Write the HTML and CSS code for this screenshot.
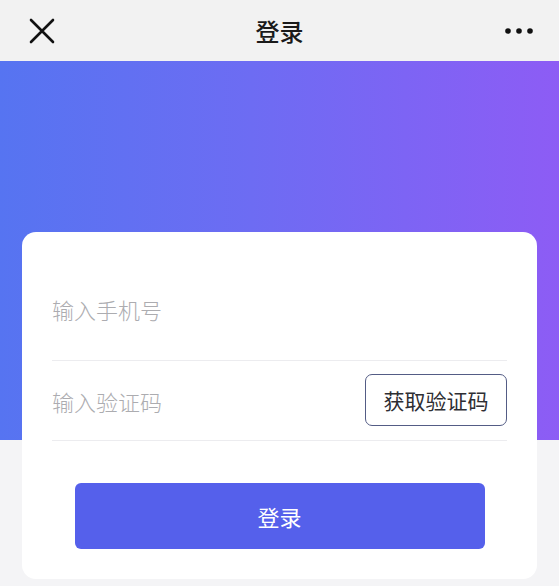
FILE: index.html
```html
<!DOCTYPE html>
<html lang="zh-CN">
<head>
<meta charset="utf-8">
<title>登录</title>
<link rel="stylesheet" href="styles.css">
</head>
<body>
<div class="page">
  <header class="topbar">
    <span class="icon-close">
      <svg width="26" height="26" viewBox="0 0 26 26"><path d="M2 2 L24 24 M24 2 L2 24" stroke="#111" stroke-width="2.6" stroke-linecap="round" fill="none"/></svg>
    </span>
    <h1 class="title">登录</h1>
    <span class="icon-more">
      <svg width="30" height="8" viewBox="0 0 30 8"><circle cx="4" cy="4" r="2.8" fill="#111"/><circle cx="15" cy="4" r="2.8" fill="#111"/><circle cx="26" cy="4" r="2.8" fill="#111"/></svg>
    </span>
  </header>
  <div class="hero"></div>
  <main class="card">
    <div class="row row-phone">
      <span class="placeholder">输入手机号</span>
    </div>
    <div class="row row-code">
      <span class="placeholder">输入验证码</span>
      <button class="code-btn">获取验证码</button>
    </div>
    <button class="login-btn">登录</button>
  </main>
</div>
</body>
</html>
```

FILE: styles.css
```css
* { box-sizing: border-box; }
html, body { margin: 0; padding: 0; }
body {
  background: #f4f4f6;
  font-family: "Noto Sans CJK SC", "Noto Sans", sans-serif;
  width: 559px;
  height: 586px;
  overflow: hidden;
}
.page { display: flex; flex-direction: column; }
.topbar {
  height: 61px;
  background: #f2f2f2;
  display: flex;
  align-items: center;
  justify-content: space-between;
  padding: 0 25px 0 29px;
}
.icon-close { display: flex; width: 26px; height: 26px; }
.icon-more { display: flex; width: 30px; height: 8px; }
.title {
  margin: 0;
  font-size: 24px;
  font-weight: 500;
  color: #1a1a1a;
  line-height: 1;
}
.hero {
  height: 379px;
  background: linear-gradient(90deg, #5674f1 0%, #6d6cf3 45%, #8d5cf5 100%);
}
.card {
  margin: -208px 22px 0 22px;
  background: #ffffff;
  border-radius: 14px;
  padding: 30px 30px 30px 30px;
  display: flex;
  flex-direction: column;
}
.row {
  display: flex;
  align-items: center;
  justify-content: space-between;
  border-bottom: 1px solid #ececef;
}
.row-phone { height: 99px; padding-bottom: 4px; }
.row-code { height: 80px; }
.placeholder {
  font-size: 22px;
  font-weight: 300;
  color: #acacb0;
  line-height: 1;
}
.code-btn {
  width: 142px;
  height: 52px;
  margin-top: -2px;
  border: 1.5px solid #535c85;
  border-radius: 7px;
  background: #fff;
  font-family: inherit;
  font-size: 21px;
  color: #2e2e33;
  padding: 0;
}
.login-btn {
  align-self: center;
  width: 410px;
  height: 66px;
  margin-top: 42px;
  border: none;
  border-radius: 6px;
  background: #5560eb;
  color: #ffffff;
  font-family: inherit;
  font-size: 22px;
  padding: 0;
}
```
